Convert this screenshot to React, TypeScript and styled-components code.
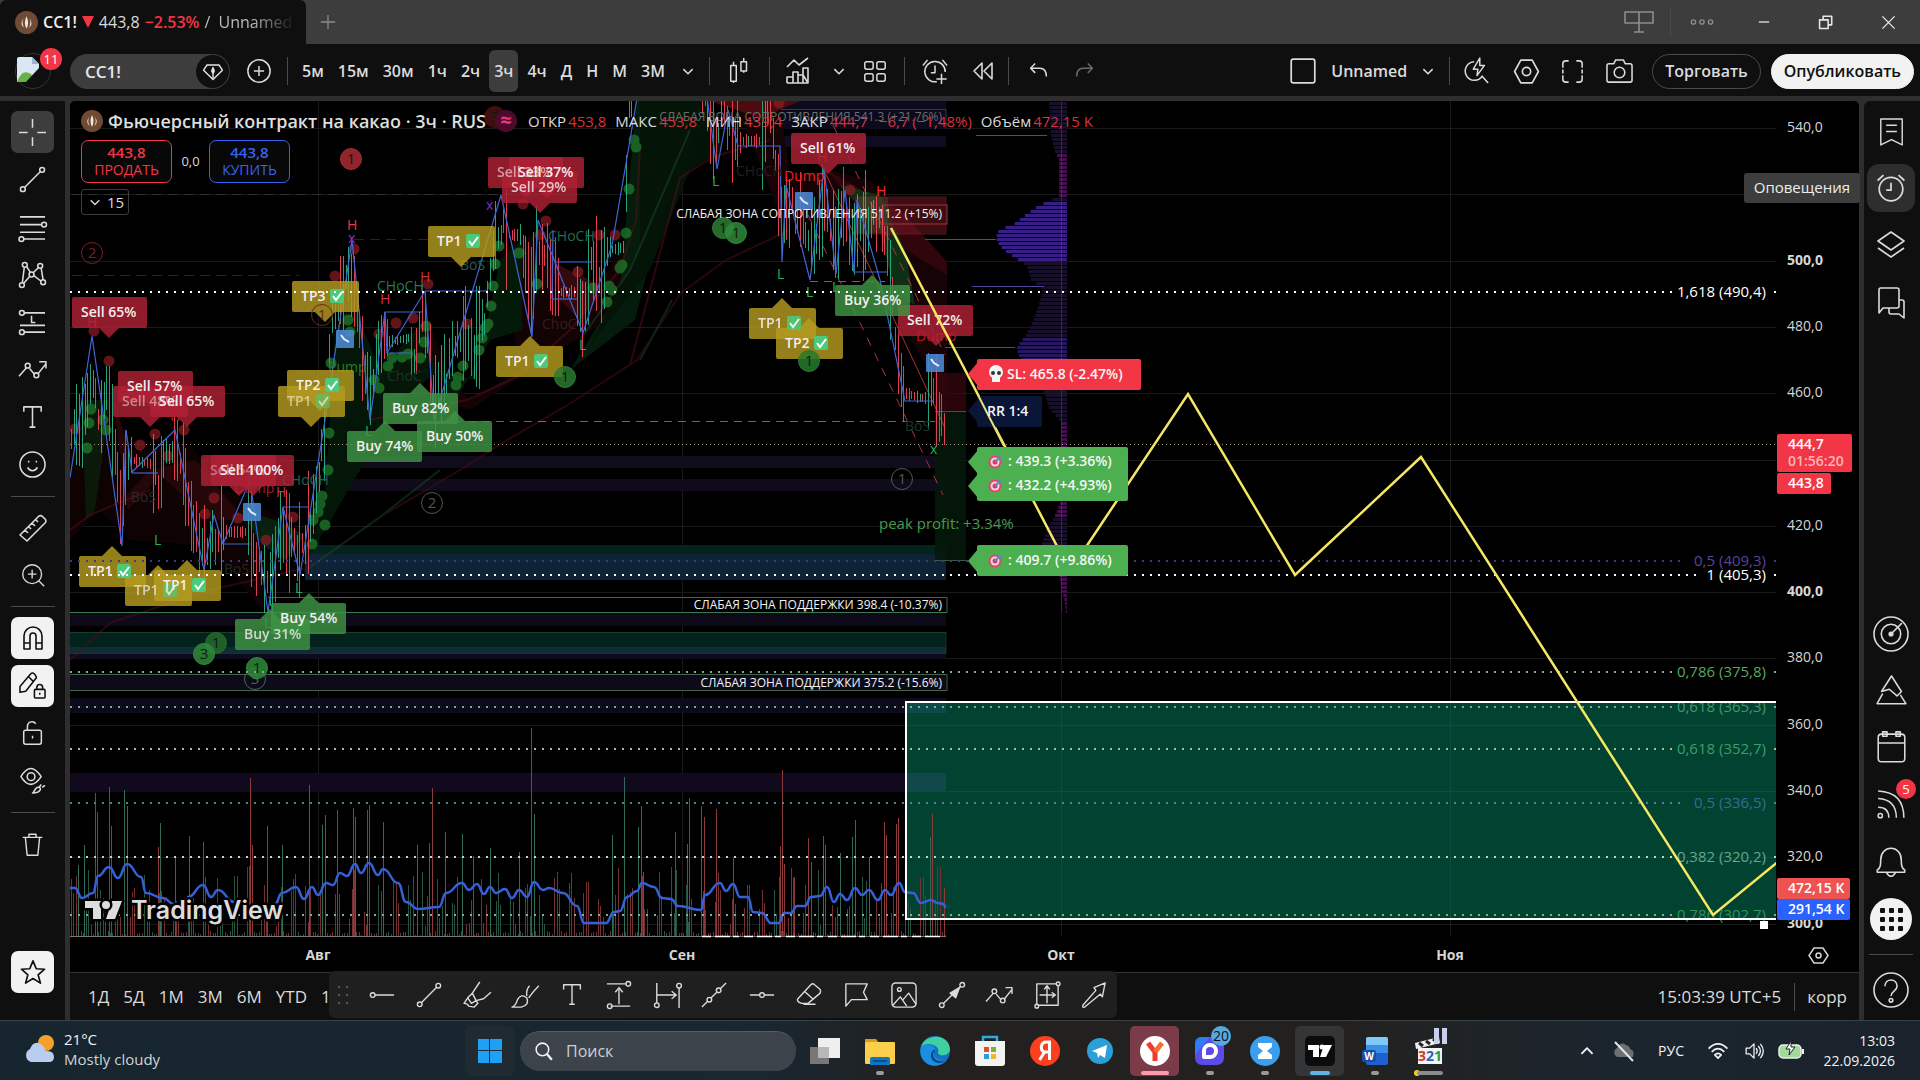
import React from 'react';
import styled, { createGlobalStyle, css } from 'styled-components';

const FONT = "'Open Sans', 'Noto Sans', sans-serif";

const Global = createGlobalStyle`
  * { box-sizing: border-box; }
  html, body, #root { height: 100%; }
  body { margin: 0; background: #0f0f0f; color: #dbdbdb; font-family: ${FONT}; font-size: 15px; overflow: hidden; }
  button, input { font: inherit; color: inherit; background: none; border: 0; padding: 0; margin: 0; }
  button { cursor: pointer; }
  svg { display: block; flex: none; }
`;

const Page = styled.div`display: flex; flex-direction: column; height: 100vh; min-height: 960px;`;

/* ---------- icons ---------- */
const ICONS: Record<string, React.ReactNode> = {
  plus: <path d="M14 5v18M5 14h18" />,
  plusCircle: <><circle cx="14" cy="14" r="12" /><path d="M14 8.500v11M8.500 14h11" /></>,
  chevron: <path d="m9 12 5 5 5-5" />,
  up: <path d="m8 17 6-6 6 6" strokeWidth="2" />,
  candles: <><path d="M4 8h6v17H4zM7 8V4M7 25v2M15 4h6v10h-6zM18 4V0M18 14v2" /></>,
  indicators: <path d="m3 10 7-7 5 5 9-7M3 26v-6h6v6M9 20v-5h5v11M14 18h5v8M19 18v-7h5v15zM3 26h21" />,
  grid: <><rect x="3" y="4" width="9" height="8" rx="2" /><rect x="16" y="4" width="9" height="8" rx="2" /><rect x="3" y="17" width="9" height="8" rx="2" /><rect x="16" y="17" width="9" height="8" rx="2" /></>,
  alarmPlus: <><path d="M16 25.500A11 11 0 1 1 25 15M14 8v8H9.500M1 8l5-6M27 8l-5-6M21 17v11M15.500 22.500h11" /></>,
  alarm: <><circle cx="14" cy="15" r="11" /><path d="M14 9v7H9.500M1.500 7 7 2M26.500 7 21 2" /></>,
  rewind: <path d="M13 6v16L5 14zM23 6v16l-8-8z" />,
  undo: <path d="m11 6-5 5 5 5M6 11h10c5 0 7 3 7 9" />,
  redo: <path d="m17 6 5 5-5 5M22 11H12c-5 0-7 3-7 9" />,
  square: <rect x="3" y="3" width="22" height="22" rx="2" />,
  flash: <path d="M11 4a10 10 0 1 0 9 15M19 19l7 8M17 0l-7 12h5l-1 7 8-11h-5z" />,
  hex: <><path d="M8.500 3h11l6 11-6 11h-11l-6-11z" /><circle cx="14" cy="14" r="4" /></>,
  full: <path d="M4 10V6a3 3 0 0 1 3-3h3M18 3h3a3 3 0 0 1 3 3v4M24 18v4a3 3 0 0 1-3 3h-3M10 25H7a3 3 0 0 1-3-3v-4M4 12v4M24 12v4" />,
  camera: <><path d="M3 6h5l2-4h8l2 4h5a2 2 0 0 1 2 2v15a2 2 0 0 1-2 2H3a2 2 0 0 1-2-2V8a2 2 0 0 1 2-2z" /><circle cx="14" cy="15" r="5.500" /></>,
  gem: <><path d="M7 7h14l4 6-11 11L3 13z" /><path d="M14 10v13M12.500 14 14 10l1.500 4-1.500 3z" /></>,
  cross: <path d="M14 0v9M14 19v9M0 14h9M19 14h9" />,
  line: <><circle cx="4" cy="24" r="2.500" /><circle cx="24" cy="4" r="2.500" /><path d="M6 22 22 6" /></>,
  fib: <><path d="M1 3h26M1 11h22M1 19h26M5 26h22" /><circle cx="26" cy="11" r="2.500" /><circle cx="2.500" cy="26" r="2.500" /></>,
  pattern: <><circle cx="6" cy="4" r="2.500" /><circle cx="22" cy="5" r="2.500" /><circle cx="13" cy="14" r="2.500" /><circle cx="3" cy="25" r="2.500" /><circle cx="25" cy="22" r="2.500" /><path d="M5.500 6.500 3.500 22.500M8 6l4 6M15 12l5-5M23 7.500l2 12M5 23l6-7M15 15l8 6" /></>,
  projection: <><path d="M5 4h22M5 24h22M1 17h26M13 7v7h4" /><circle cx="3" cy="4" r="2.500" /><circle cx="3" cy="24" r="2.500" /></>,
  zigzag: <><path d="m0 21 8-9M11 13l5 6M20 18l8-10M21 6h7v7" /><circle cx="9" cy="10" r="2.500" /><circle cx="18" cy="20" r="2.500" /></>,
  text: <path d="M5 8V3h18v5M14 3v21M11 24h6" />,
  smile: <><circle cx="14" cy="14" r="13" /><path d="M9 17c2 4.500 8 4.500 10 0M10 10v2M18 10v2" /></>,
  ruler: <path d="m1 21 19-19q2-1 3.500 .500l3 3q1 1.500 0 3L8 27zM6 16l3 3M10 13l2 2M13 9l3 3M17 6l2 2" />,
  zoom: <><circle cx="13" cy="13" r="11" /><path d="m21 21 6 6M13 8v10M8 13h10" /></>,
  magnet: <path d="M5 25V12a9 9 0 0 1 18 0v13h-6V12a3 3 0 0 0-6 0v13zM5 19h6M17 19h6" />,
  pencilLock: <><path d="m1 15 11-13q2-2 4 0t2 4L7 20l-6 1zM10 5l5 5" /><rect x="16" y="18" width="11" height="9" rx="1" /><path d="M18.500 18v-2a3 3 0 0 1 6 0v2M21.500 21.500v2" /></>,
  lock: <><rect x="4" y="11" width="19" height="15" rx="2" /><path d="M8 11V6a5 5 0 0 1 9-2M13.500 17v3" /></>,
  eye: <><path d="M2 10q10-17 21 0-11 16-21 0z" /><circle cx="12.500" cy="10" r="4" /><path d="M14 27c2 0 2-6 6-6s3 6-6 6zM21 21l2-3M24 21l3-2" /></>,
  trash: <path d="M3 6h22M10 6V2.500h8V6M6 6l2 20h12l2-20" />,
  star: <path d="m14 2 3.500 8.500 9 .500-7 6 2.500 9-8-5-8 5 2.500-9-7-6 9-.500z" />,
  bookmark: <path d="M2 0h24v29l-12-6-12 6zM8 7h12M8 14h12" />,
  layers: <path d="m14 1 13 9-13 9L1 10zM1 17l13 9 13-9" />,
  chat: <path d="M3 0h17a2 2 0 0 1 2 2v16a2 2 0 0 1-2 2H6l-4 5V2a2 2 0 0 1 1-2M22 12h3a2 2 0 0 1 2 2v16l-5-4h-8a2 2 0 0 1-2-2v-4" />,
  target: <><circle cx="14" cy="14" r="14" /><circle cx="14" cy="14" r="8" /><circle cx="14" cy="14" r="1.500" fill="currentColor" /><path d="m14 14 9-9" /></>,
  pyramid: <path d="M14 0 5 14l7-2 7 6 4-4zM6 16 1 25h26l-5-8" />,
  calendar: <><rect x="2" y="1" width="24" height="25" rx="3" /><path d="M2 9h24M6-1h4v4H6zM18-1h4v4h-4z" /></>,
  rss: <><circle cx="4" cy="24" r="2" /><path d="M2 16q10 0 10 10M2 8q17 1 17 18M2 1q24 1 24 25" /></>,
  bell: <path d="M2 21c3-2 3-5 3-9 0-6 4-10 9-10s9 4 9 10c0 4 0 7 3 9v2H2zM10 23q4 7 8 0" />,
  help: <><circle cx="14" cy="14" r="14" /><path d="M9 11c0-7 10-7 10 0 0 4-5 4-5 8" /><circle cx="14" cy="22.500" r="1.500" /></>,
  hray: <><circle cx="4" cy="14" r="2.500" /><path d="M6.500 14H27" /></>,
  marker: <path d="m17 0-8 12 4 8 8-2 8-7M9 12l-5 5 4 6 5-3M4 17l-4 6q4 0 5 3l6 1 4-4-2-3" />,
  brush: <path d="M1 27q4-1 6-8 4-7 10-2 3 8-6 10zM17 15q-1-7 3-11M19 17q5-7 11-13" />,
  vrange: <><path d="M1 2h21M5 26h21M14 24V8M10 11l4-5 4 5" /><circle cx="24" cy="2" r="2.500" /><circle cx="4" cy="26" r="2.500" /></>,
  hrange: <><path d="M3 1v22M27 6v22M3 14h20M19 10l5 4-5 4" /><circle cx="3" cy="25" r="2.500" /><circle cx="27" cy="4" r="2.500" /></>,
  ext: <><path d="m1 27 6-6M11 17l6-6M21 7l6-6" /><circle cx="9" cy="19" r="2.500" /><circle cx="19" cy="9" r="2.500" /></>,
  hline: <><circle cx="14" cy="14" r="2.500" /><path d="M1 14h10M17 14h10" /></>,
  eraser: <path d="m2 18 14-15q2-2 4 0l6 5q1 2 0 4L13 23H6q-6-2-4-5zM9 10l9 8M8 24h13" />,
  flag: <path d="M2 26V2h23l-4 9 4 8H8z" />,
  image: <><rect x="1" y="1" width="26" height="26" rx="4" /><circle cx="9" cy="8" r="2" /><path d="m2 25 8-9 7 10M13 19l6-7 8 12" /></>,
  arrowLine: <><circle cx="3" cy="25" r="2.500" /><circle cx="25" cy="3" r="2.500" /><path d="m5 23 18-18" /><path d="m22 6-4 11-6-5z" fill="currentColor" /></>,
  cells: <><path d="M3 25V2h21M26 4v21H5M14 5v18M6 14h17M11 8l3-4 3 4M19 11l4 3-4 3" /><circle cx="26" cy="2" r="2" /><circle cx="3" cy="26" r="2" /></>,
  arrowOut: <path d="M26 1 14 6l2 3L2 25q-1 3 2 2l17-14 2 3z" />,
  search: <><circle cx="12" cy="12" r="8" strokeWidth="2" /><path d="m18 18 6 7" strokeWidth="3" /></>,
  screen: <path d="M1 4h28v11H1zM15 4v20M10 24h10" />,
  dots: <><circle cx="4" cy="14" r="2.500" /><circle cx="14" cy="14" r="2.500" /><circle cx="24" cy="14" r="2.500" /></>,
  minus: <path d="M6 14h16" strokeWidth="2" />,
  restore: <path d="M5 11h12v12H5zM10 11V6h12v12h-5" strokeWidth="2.200" />,
  close: <path d="m5 5 18 18M23 5 5 23" strokeWidth="2" />,
  wifi: <path d="M2 11q12-12 24 0M6 15q8-8 16 0M10 19q4-4 8 0l-4 4z" strokeWidth="2.200" />,
  sound: <path d="M3 10h5l6-6v20l-6-6H3zM17 10q3 4 0 8M20 7q6 7 0 14M23 4q8 10 0 20" strokeWidth="1.800" />,
};

const Icon = ({ n, s = 28, w = 1.6 }: { n: string; s?: number; w?: number }) => (
  <svg width={s} height={s} viewBox="0 0 28 28" fill="none" stroke="currentColor" strokeWidth={w} strokeLinejoin="round" overflow="visible" aria-hidden="true">{ICONS[n]}</svg>
);

const Cocoa = ({ s }: { s: number }) => (
  <svg width={s} height={s} viewBox="0 0 22 22" aria-hidden="true"><circle cx="11" cy="11" r="11" fill="#6f4a35" /><path d="M11 5q3 6 0 12-3-6 0-12M8 7q-2 5 1 9-5-3-1-9M14 7q2 5-1 9 5-3 1-9" fill="#f5e9de" /></svg>
);

/* ---------- title bar ---------- */
const TitleBar = styled.header`display: flex; align-items: stretch; height: 44px; background: #3d3d3d;`;
const Tab = styled.div`
  display: flex; align-items: center; gap: 5px; width: 306px; padding: 0 6px 0 15px; background: #0f0f0f; border-radius: 6px 6px 0 0;
  font-size: 16px; white-space: nowrap; overflow: hidden;
`;
const TabSymbol = styled.b`font-weight: 600; color: #eee;`;
const TabTail = styled.span`flex: 1; color: #bbb; mask-image: linear-gradient(90deg, #000 50%, transparent 95%);`;
const Triangle = styled.i`border: 6px solid transparent; border-top: 12px solid #f23645; border-bottom: 0;`;
const Change = styled.b`color: #f23645; font-weight: 600;`;
const Grow = styled.div`flex: 1;`;
const WinButton = styled.button<{ $w: number; $dim?: boolean }>`
  width: ${p => p.$w}px; display: grid; place-items: center; color: ${p => (p.$dim ? '#8d8d8d' : '#e6e6e6')};
`;
const Sep = styled.span<{ $m?: string }>`width: 1px; height: 28px; background: #4a4a4a; align-self: center; flex: none; margin: ${p => p.$m || '0'};`;

/* ---------- top toolbar ---------- */
const Toolbar = styled.nav`display: flex; align-items: center; height: 52px; padding: 2px 6px 0 15px; background: #0f0f0f; white-space: nowrap;`;
const Avatar = styled.button`position: relative; width: 36px; height: 36px; border: 1px solid #333; border-radius: 50%; margin-right: 19px;`;
const Count = styled.span`
  position: absolute; right: -12px; top: -6px; width: 22px; height: 22px; border-radius: 50%; background: #f23645; color: #fff;
  font-size: 13px; line-height: 22px; text-align: center;
`;
const SymbolPill = styled.button`
  display: flex; align-items: center; justify-content: space-between; width: 160px; height: 35px; border-radius: 18px; background: #3d3d3d;
  padding: 0 1px 0 15px; font-size: 17px; font-weight: 600; color: #e6e6e6;
`;
const PillBadge = styled.span`display: grid; place-items: center; width: 33px; height: 33px; border-radius: 50%; background: #0f0f0f;`;
const Tool = styled.button<{ $w: number; $dim?: boolean }>`
  width: ${p => p.$w}px; height: 42px; display: grid; place-items: center; flex: none; color: ${p => (p.$dim ? '#6b6b6b' : '#dbdbdb')};
`;
const Intervals = styled.div`display: flex; gap: 4px; margin-left: 9px;`;
const Interval = styled.button<{ $on?: boolean }>`
  height: 42px; padding: 0 5px; border-radius: 6px; font-size: 16px; font-weight: 600; color: #dbdbdb;
  ${p => p.$on && css`background: #3d3d3d;`}
`;
const LayoutName = styled.button`font-weight: 600; font-size: 16px; margin-left: 12px;`;
const RoundButton = styled.button<{ $solid?: boolean }>`
  height: 35px; border-radius: 18px; padding: 0 12px; margin-left: 10px; font-size: 16px; font-weight: 600;
  border: 1px solid ${p => (p.$solid ? '#f2f2f2' : '#4a4a4a')};
  ${p => p.$solid && css`background: #f2f2f2; color: #0f0f0f;`}
`;

/* ---------- body ---------- */
const Body = styled.main`flex: 1; min-height: 0; display: flex; gap: 5px; padding-top: 5px; background: #2e2e2e;`;
const LeftBar = styled.aside`display: flex; flex-direction: column; align-items: center; width: 65px; padding: 10px 0 27px; background: #0f0f0f;`;
const Group = styled.div<{ $h: number }>`display: flex; flex-direction: column; justify-content: space-between; height: ${p => p.$h}px;`;
const SideTool = styled.button<{ $tone?: 'active' | 'white' }>`
  width: 43px; height: 42px; display: grid; place-items: center; border-radius: 7px; flex: none;
  ${p => p.$tone === 'active' && css`background: #3d3d3d;`}
  ${p => p.$tone === 'white' && css`background: #f2f2f2; color: #0f0f0f;`}
`;
const Rule = styled.hr<{ $m?: number }>`width: 44px; height: 1px; margin: ${p => p.$m ?? 10}px 0; border: 0; background: #4a4a4a; flex: none;`;
const RightBar = styled.aside`display: flex; flex-direction: column; align-items: center; gap: 9px; width: 56px; padding: 6px 2px 6px 0; background: #0f0f0f; border-radius: 6px 0 0 0;`;
const RightTool = styled.button<{ $on?: boolean }>`
  position: relative; width: 48px; height: 48px; display: grid; place-items: center; border-radius: 12px; flex: none;
  ${p => p.$on && css`background: #2e2e2e;`}
`;
const Tip = styled.span`
  position: absolute; right: 55px; top: 9px; height: 30px; padding: 0 10px; border-radius: 3px; background: #3d3d3d; color: #eee;
  font-size: 15px; line-height: 29px; z-index: 3;
`;
const RightCount = styled(Count)`right: -1px; top: -2px; width: 20px; height: 20px; line-height: 20px;`;
const Apps = styled.span`
  display: grid; grid-template-columns: repeat(3, 5px); gap: 4px; place-content: center; width: 42px; height: 42px; border-radius: 50%; background: #f2f2f2;
  i { width: 5px; height: 5px; background: #111; border-radius: 1px; }
`;
const Center = styled.section`position: relative; flex: 1; min-width: 0; display: flex; flex-direction: column; background: #000; border-radius: 5px 5px 0 0;`;
const Chart = styled.div`position: relative; flex: 1; min-height: 0; overflow: hidden; > svg { width: 100%; height: 100%; }`;

/* ---------- legend over the chart ---------- */
const Legend = styled.div`position: absolute; left: 11px; top: 7px; display: flex; flex-direction: column; gap: 6px; align-items: flex-start;`;
const LegendRow = styled.div`display: flex; align-items: center; height: 25px; white-space: nowrap;`;
const LegendTitle = styled.h1`margin: 0 0 0 5px; font-size: 18px; font-weight: 600; color: #dedede; width: 380px; overflow: hidden;`;
const Approx = styled.span`
  width: 22px; height: 22px; margin: 0 11px 0 7px; border-radius: 50%; background: #4d0b2b; color: #e8367f; font-size: 20px; line-height: 20px; text-align: center; font-weight: 700;
`;
const Ohlc = styled.span`display: flex; gap: 9px; font-size: 15px; color: #dbdbdb; em { color: #d8313f; font-style: normal; margin-left: 2px; }`;
const TradeRow = styled.div`display: flex; align-items: center; height: 44px;`;
const TradeButton = styled.button<{ $c: string; $w: number }>`
  display: flex; flex-direction: column; align-items: center; justify-content: center; width: ${p => p.$w}px; height: 43px; border: 1px solid ${p => p.$c};
  border-radius: 7px; color: ${p => p.$c}; background: #080808; font-size: 14px; line-height: 17px; b { font-size: 15px; font-weight: 600; }
`;
const Spread = styled.span`width: 37px; text-align: center; font-size: 13px;`;
const Collapse = styled.button`display: flex; align-items: center; height: 26px; width: 48px; padding-left: 1px; border: 1px solid #3d3d3d; border-radius: 3px; font-size: 15px;`;

/* ---------- bottom bar ---------- */
const BottomBar = styled.footer`position: relative; display: flex; align-items: center; height: 48px; padding: 0 12px 0 13px; background: #0f0f0f; border-top: 1px solid #333; font-size: 17px; white-space: nowrap;`;
const Range = styled.button`padding: 0 5px; margin-right: 4px; font-weight: 500;`;
const Clock = styled.button`font-weight: 500;`;
const Favorites = styled.div`
  position: absolute; left: 259px; top: -2px; display: flex; align-items: center; justify-content: space-between; width: 788px; max-width: 60%; height: 47px;
  padding: 0 9px; background: #1f1f1f; border-radius: 6px; overflow: hidden;
`;
const FavTool = styled.button`width: 28px; height: 40px; display: grid; place-items: center;`;
const Grip = styled.span`display: grid; grid-template-columns: 2px 2px; gap: 6px; i { width: 2px; height: 2px; background: #555; }`;

/* ---------- taskbar ---------- */
const Taskbar = styled.div`
  display: flex; align-items: center; height: 60px; border-top: 1px solid #3b4347; color: #f2f2f2;
  background: linear-gradient(90deg, #16252e 0, #18262f 20%, #1a2630 40%, #222120 48%, #232120 70%, #1b252e 84%, #1a232c 100%);
`;
const Weather = styled.button`display: flex; align-items: center; gap: 8px; width: 465px; padding: 0 0 3px 24px; text-align: left; font-size: 15px; line-height: 20px; small { display: block; font-size: 15px; color: #cfd4d7; }`;
const Task = styled.button<{ $bg?: string }>`
  position: relative; display: grid; place-items: center; width: 49px; height: 50px; margin-right: 6px; border-radius: 5px; background: ${p => p.$bg || 'transparent'}; flex: none;
`;
const Mark = styled.i<{ $w: number; $c: string }>`position: absolute; left: 50%; bottom: 1px; width: ${p => p.$w}px; height: 4px; margin-left: -${p => p.$w / 2}px; border-radius: 2px; background: ${p => p.$c};`;
const SearchBox = styled.label`position: relative; display: flex; align-items: center; gap: 11px; width: 276px; height: 40px; margin: 0 4px 0 0; padding-left: 13px; border-radius: 20px; background: #3c434a; border-top: 1px solid #565c61;
  input { width: 180px; font-size: 16px; outline: 0; } input::placeholder { color: #cdd0d2; opacity: 1; }`;
const Tray = styled.div`display: flex; align-items: center; gap: 12px; margin-left: auto; padding-right: 25px; font-size: 14px;`;
const TrayItem = styled.button<{ $pad?: number }>`display: grid; place-items: center; min-width: 24px; height: 40px; padding: 0 ${p => p.$pad || 0}px;`;
const DateTime = styled.button`width: 78px; text-align: right; font-size: 14px; line-height: 20px;`;

/* ---------- chart data ---------- */
type P = [number, number];
const pts = (a: P[]) => a.map(p => p.join(',')).join(' ');
const wave = (a: P[]) => a.reduce((d, [x, y], i) => {
  if (!i) return `M${x} ${y}`;
  const m = (a[i - 1][0] + x) / 2;
  return `${d}C${m} ${a[i - 1][1]} ${m} ${y} ${x} ${y}`;
}, '');
const noise = (seed: number) => { const v = Math.sin(seed * 127.1) * 43758.5453; return v - Math.floor(v); };

const PRICE: P[] = [[70, 440], [80, 430], [92, 370], [99, 420], [108, 390], [122, 520], [126, 465], [132, 460], [152, 464], [159, 485], [164, 455], [175, 448], [184, 475], [193, 530], [204, 550], [214, 535], [219, 545], [224, 532], [246, 532], [250, 510], [254, 555], [268, 590], [283, 530], [300, 556], [308, 535], [318, 480], [325, 430], [331, 320], [340, 300], [352, 275], [361, 345], [369, 395], [383, 335], [388, 342], [410, 338], [415, 360], [422, 310], [434, 395], [445, 380], [462, 330], [475, 350], [486, 310], [492, 250], [500, 225], [508, 235], [520, 235], [532, 300], [538, 240], [553, 280], [560, 292], [575, 292], [583, 315], [593, 260], [600, 280], [612, 250], [624, 247], [628, 130], [636, 60], [702, 60], [706, 100], [717, 145], [722, 115], [735, 135], [742, 141], [762, 141], [770, 105], [782, 225], [790, 205], [802, 215], [811, 255], [824, 205], [836, 245], [842, 210], [854, 240], [860, 235], [868, 225], [882, 215], [888, 265], [900, 370], [905, 393], [920, 398], [928, 398], [931, 385], [936, 405], [946, 425]];

const priceAt = (x: number) => {
  for (let i = 1; i < PRICE.length; i++) if (x <= PRICE[i][0]) {
    const [a, b] = [PRICE[i - 1], PRICE[i]];
    const s = (b[1] - a[1]) / (b[0] - a[0]);
    return { y: a[1] + s * (x - a[0]), s };
  }
  return { y: 425, s: 1 };
};
const BARS = Array.from({ length: 322 }, (_, i) => {
  const x = Math.round(71 + i * 2.72) + 0.5;
  const { y, s } = priceAt(x);
  const flat = Math.abs(s) < 0.5;
  const h = flat ? 3 + noise(i) * 4 : 10 + noise(i) ** 1.5 * 42;
  const o = flat ? 0 : (noise(i + 500) - 0.5) * 20;
  const up = s < 0 ? noise(i + 900) > 0.12 : noise(i + 900) > 0.85;
  return { x, y1: Math.round(y - h + o), y2: Math.round(y + h + o), c: up ? '#2cb389' : '#f5455a' };
});

const ZIG: P[][] = [
  [[70, 478], [92, 336], [122, 546], [126, 430], [132, 472]],
  [[132, 473], [158, 473]], [[132, 472], [175, 430], [204, 570], [214, 515], [223, 544], [250, 544]], [[223, 544], [250, 480], [268, 612], [283, 507], [308, 507]],
  [[283, 507], [300, 575], [325, 420], [352, 240], [370, 420], [385, 312], [422, 312]], [[385, 312], [387, 353], [412, 353]], [[387, 353], [425, 291], [487, 291]], [[425, 291], [434, 420], [501, 195], [532, 337], [538, 220], [555, 262], [591, 262]],
  [[555, 262], [583, 333], [612, 245], [630, 140], [640, 80]], [[552, 299], [578, 299]], [[553, 230], [552, 299]], [[706, 90], [717, 169], [728, 110], [738, 146], [780, 146], [782, 262], [786, 185], [810, 280], [824, 168], [836, 274], [845, 190], [854, 272], [888, 272]],
  [[854, 272], [857, 200], [880, 280], [905, 401], [934, 401]],
];

const GREEN_DOTS: P[] = [[91, 409], [89, 423], [87, 448], [103, 420], [106, 430], [325, 525], [322, 496], [320, 504], [318, 512], [313, 520], [312, 544], [328, 470], [329, 433], [331, 363], [348, 320], [350, 332], [374, 380], [379, 388], [388, 366], [392, 358], [402, 357], [408, 354], [420, 358], [424, 342], [426, 326], [463, 366], [458, 377], [456, 385], [479, 350], [482, 338], [485, 328], [488, 324], [491, 306], [493, 286], [495, 264], [499, 246], [519, 253], [537, 284], [593, 288], [607, 302], [609, 286], [612, 290], [622, 265], [620, 268], [626, 233], [629, 189], [634, 140], [636, 147]];
const RED_DOTS: P[] = [[94, 331], [109, 361], [75, 429], [140, 445], [155, 434], [168, 456], [184, 430], [214, 498], [205, 514], [238, 518], [266, 540], [293, 517], [335, 276], [354, 249], [379, 334], [396, 323], [413, 318], [428, 284], [467, 324], [523, 204], [546, 221], [540, 235], [578, 272], [599, 235], [615, 235], [779, 103], [850, 190]];

const VOL: [number, number, boolean][] = [[95, 793, false], [97, 812, false], [109, 787, false], [111, 826, false], [158, 847, false], [189, 836, false], [203, 842, false], [250, 778, false], [252, 845, false], [267, 826, false], [337, 810, false], [367, 810, false], [369, 805, false], [432, 788, false], [429, 843, false], [473, 856, false], [531, 728, false], [78, 865, true], [84, 845, true], [124, 790, true], [127, 806, true], [160, 823, true], [175, 858, true], [282, 845, true], [309, 785, true], [325, 815, true], [322, 825, true], [353, 808, true], [355, 817, true], [383, 822, true], [417, 845, true], [445, 832, true], [462, 834, true], [490, 848, true], [519, 852, true], [534, 814, true], [612, 835, true], [624, 777, true], [638, 827, true], [641, 806, true], [643, 872, true], [675, 832, false], [689, 798, false], [687, 844, false], [701, 806, false], [704, 817, false], [716, 809, false], [733, 858, false], [782, 770, false], [780, 846, false], [784, 864, false], [794, 877, false], [808, 838, false], [811, 862, false], [823, 836, true], [825, 845, true], [840, 853, true], [855, 820, true], [852, 837, true], [869, 857, true], [884, 822, false], [886, 835, false], [898, 818, false], [896, 824, false], [930, 837, true], [932, 814, false], [944, 888, false]];
const SMALL_VOL = Array.from({ length: 359 }, (_, i) => {
  const tall = i % 6 < 3;
  const h = tall ? 10 + noise(i + 77) * 60 : 1 + noise(i) * 4;
  return { x: Math.round(71 + i * 2.44), h: Math.round(h), c: noise(Math.floor(i / 6) + 900) > 0.5 ? '#255443' : '#76302f' };
});
const MA: P[][] = [
  [[70, 888], [75, 888], [82, 898], [93, 893], [98, 876], [109, 867], [118, 878], [127, 864], [141, 877], [146, 893], [163, 898], [174, 904]],
  [[188, 897], [203, 885], [211, 897], [218, 890], [234, 902]],
  [[275, 904], [282, 893], [296, 887], [304, 899], [312, 887], [318, 895], [326, 883], [333, 885], [340, 873], [347, 876], [355, 864], [361, 873], [369, 863], [378, 875], [383, 869], [398, 883], [406, 902], [418, 909], [439, 907], [446, 893], [462, 883], [469, 890], [477, 884], [484, 894], [490, 887], [496, 893], [505, 889], [512, 898], [519, 890], [527, 897], [534, 882], [543, 890], [549, 888], [563, 893], [577, 906], [584, 923], [606, 923], [614, 912], [620, 911], [627, 897], [637, 891], [642, 883], [654, 887], [662, 898], [671, 899], [678, 906], [701, 910], [705, 895], [720, 883], [726, 891], [733, 884], [740, 897], [748, 897], [753, 912], [762, 913], [771, 923], [779, 923], [784, 913], [791, 913], [797, 906], [805, 906], [811, 897], [820, 896], [827, 887], [834, 902], [840, 894], [847, 900], [855, 888], [862, 895], [869, 890], [878, 900], [885, 890], [891, 895], [899, 883], [905, 892], [913, 893], [921, 903], [931, 900], [938, 903], [944, 904], [945, 907]],
];
const PROFILE: P[] = [[101, 18], [134, 16], [150, 12], [158, 8], [195, 8], [204, 28], [214, 42], [224, 55], [228, 68], [236, 71], [241, 69], [248, 64], [256, 52], [264, 40], [278, 36], [287, 24], [300, 27], [320, 34], [335, 42], [345, 50], [352, 49], [358, 46], [392, 22], [407, 18], [420, 6], [500, 6], [514, 12], [528, 20], [545, 26], [556, 20], [572, 8], [590, 5], [600, 2], [611, 1]];
const profileWidth = (y: number) => {
  for (let i = 1; i < PROFILE.length; i++) if (y <= PROFILE[i][0]) {
    const [a, b] = [PROFILE[i - 1], PROFILE[i]];
    return a[1] + ((b[1] - a[1]) * (y - a[0])) / (b[0] - a[0]);
  }
  return 0;
};
const PROFILE_ROWS = Array.from({ length: 128 }, (_, i) => 102 + i * 4);

const TONES = { sell: '#b02135', buy: '#3f9445', tp: '#b59c20' };
type Callout = { k: keyof typeof TONES; x: number; y: number; w?: number; px: number; up?: boolean; t: string; dim?: number };
const CALLOUTS: Callout[] = [
  { k: 'sell', x: 72, y: 297, px: 109, t: 'Sell 65%' }, { k: 'sell', x: 118, y: 371, px: 156, t: 'Sell 57%' }, { k: 'sell', x: 113, y: 386, px: 150, t: 'Sell 48%', dim: 0.5 }, { k: 'sell', x: 150, y: 386, px: 187, t: 'Sell 65%' },
  { k: 'sell', x: 201, y: 455, px: 239, t: 'Sell 54%', dim: 0.4 }, { k: 'sell', x: 211, y: 455, w: 83, px: 253, t: 'Sell 100%' },
  { k: 'sell', x: 488, y: 157, px: 526, t: 'Sell 33%', dim: 0.6 }, { k: 'sell', x: 502, y: 172, px: 540, t: 'Sell 29%', dim: 0.8 }, { k: 'sell', x: 509, y: 157, px: 547, t: 'Sell 37%' },
  { k: 'sell', x: 791, y: 133, px: 828, t: 'Sell 61%' }, { k: 'sell', x: 898, y: 305, px: 936, t: 'Sell 72%' },
  { k: 'buy', x: 383, y: 393, px: 420, up: true, t: 'Buy 82%' }, { k: 'buy', x: 417, y: 421, px: 455, up: true, t: 'Buy 50%' }, { k: 'buy', x: 347, y: 431, px: 385, up: true, t: 'Buy 74%' },
  { k: 'buy', x: 235, y: 619, px: 270, up: true, t: 'Buy 31%', dim: 0.8 }, { k: 'buy', x: 271, y: 603, px: 309, up: true, t: 'Buy 54%' }, { k: 'buy', x: 835, y: 285, px: 872, up: true, t: 'Buy 36%' },
  { k: 'tp', x: 428, y: 226, px: 461, t: 'TP1' }, { k: 'tp', x: 292, y: 281, px: 325, t: 'TP3' }, { k: 'tp', x: 278, y: 386, px: 311, t: 'TP1', dim: 0.6 }, { k: 'tp', x: 287, y: 370, px: 320, t: 'TP2' },
  { k: 'tp', x: 496, y: 346, px: 530, up: true, t: 'TP1' }, { k: 'tp', x: 79, y: 556, px: 112, up: true, t: 'TP1' }, { k: 'tp', x: 125, y: 575, px: 158, up: true, t: 'TP1', dim: 0.7 }, { k: 'tp', x: 154, y: 570, px: 187, up: true, t: 'TP1' },
  { k: 'tp', x: 749, y: 308, px: 782, up: true, t: 'TP1', dim: 0.9 }, { k: 'tp', x: 776, y: 328, px: 809, up: true, t: 'TP2' },
];

const CalloutShape = ({ k, x, y, w, px, up }: Callout) => (
  <g fill={TONES[k]} opacity=".82">
    <rect x={x} y={y} width={w || (k === 'tp' ? 67 : 75)} height="31" rx="2" />
    <path d={up ? `M${px - 10} ${y}l10-10 10 10z` : `M${px - 10} ${y + 31}l10 10 10-10z`} />
  </g>
);
const CalloutText = ({ k, x, y, t, dim = 1 }: Callout) => (
  <g opacity={dim}>
    {k === 'tp' && <g><rect x={x + 38} y={y + 8} width="14" height="14" rx="2" fill="#4cc97a" /><path d={`M${x + 41} ${y + 15}l3 4 6-8`} stroke="#fff" strokeWidth="2" fill="none" /></g>}
    <text x={x + 9} y={y + 20} fontSize="14" fontWeight="600" fill="#f4eeee">{t}</text>
  </g>
);

const SMALL: [number, number, string, string][] = [
  [87, 327, 'H', '#d32f3f'], [347, 230, 'H', '#f23645'], [348, 243, 'x', '#a02ac0'], [380, 304, 'H', '#d32f3f'], [420, 282, 'H', '#d32f3f'], [170, 421, 'H', '#a52a36'], [276, 497, 'H', '#d32f3f'], [486, 210, 'x', '#8a2ac0'], [817, 162, 'H', '#e02d3c'], [876, 196, 'H', '#f23030'],
  [154, 545, 'L', '#22b35c'], [295, 593, 'L', '#22b35c'], [264, 628, 'L', '#2c9a52'], [365, 436, 'L', '#22b35c'], [579, 350, 'L', '#22b35c'], [712, 186, 'L', '#22b35c'], [777, 279, 'L', '#22b35c'], [806, 297, 'L', '#22b35c'], [832, 292, 'L', '#22b35c'], [930, 454, 'x', '#22b35c'],
  [377, 291, 'CHoCH', '#1f7a5b'], [548, 241, 'CHoCH', '#1f6e53'], [282, 485, 'CHoCH', '#24604e'], [460, 270, 'BoS', '#2a5c48'], [328, 372, 'Pump', '#237d2a'], [234, 493, 'Dump', '#a51d2a'], [784, 181, 'Dump', '#f02020'], [916, 341, 'Dump', '#c01824'],
  [131, 502, 'BoS', '#2a2a2a'], [224, 574, 'BoS', '#1e2b24'], [542, 329, 'ChoC', '#3a1a1e'], [387, 381, 'ChoC', '#1c3322'], [736, 176, 'CHoCH', '#251d1d'], [905, 431, 'BoS', '#173a25'],
];
const WAVES: [number, number, string, string, boolean][] = [[351, 159, '1', '#a92b34', true], [92, 253, '2', '#7a1f26', false], [432, 503, '2', '#4a5a50', false], [902, 479, '1', '#4c5c50', false], [216, 643, '1', '#256b2d', true], [204, 654, '3', '#2f8a3a', true], [255, 679, '3', '#476655', false], [257, 668, '1', '#2f8a3a', true], [565, 377, '1', '#2a7a30', true], [723, 228, '1', '#2f7d35', true], [736, 233, '1', '#2f8a3a', true], [809, 361, '1', '#267a2c', true], [495, 117, '3', '#4a1016', true], [322, 315, '1', '#6b2a1c', false]];
const ZONES: [number, number, number, number, string][] = [[781, 101, 165, 28, '#0c0b1e'], [781, 136, 165, 11, '#0f0c20'], [325, 456, 621, 12, '#100c1c'], [325, 479, 621, 12, '#0f0b1b'], [305, 545, 641, 9, '#04231d'], [305, 554, 641, 26, '#0e2436'], [70, 613, 876, 13, '#0e0919'], [70, 632, 876, 21, '#02221b'], [70, 647, 876, 6, '#102c36'], [70, 653, 876, 6, '#0d0b1c'], [70, 674, 876, 16, '#0d0b1a'], [70, 698, 876, 15, '#0c0b1a'], [70, 773, 876, 19, '#110a1e']];
const LEVELS: [number, string, string, string, number][] = [[292, '1,618 (490,4)', '#ffffff', '#fff', 1672], [561, '0,5 (409,3)', '#3f3c78', '#5543a0', 1684], [575, '1 (405,3)', '#ffffff', '#fff', 1698], [672, '0,786 (375,8)', '#7fa98a', '#57a860', 1672], [707, '0,618 (365,3)', '#8aa59a', '#419969', 1672], [749, '0,618 (352,7)', '#9fc0a2', '#3f9d6a', 1672], [803, '0,5 (336,5)', '#54809a', '#2f6f92', 1684], [857, '0,382 (320,2)', '#c5d6cc', '#63a694', 1672], [915, '0,786 (302,7)', '#7fb096', '#2e9457', 1672]];
const BUMPS: [number, number][] = [[345, 339], [252, 512], [804, 201], [935, 363]];

const Target = ({ x, y }: { x: number; y: number }) => (
  <g><circle cx={x} cy={y} r="6.500" fill="#e0466f" /><circle cx={x} cy={y} r="4.500" fill="#f3d5e0" /><circle cx={x} cy={y} r="2.500" fill="#d63a66" /><path d={`M${x} ${y}l6-6`} stroke="#4f8fd0" strokeWidth="2" /></g>
);
const SideTag = ({ y, h = 31, w, fill, tips }: { y: number; h?: number; w: number; fill: string; tips: number[] }) => (
  <g fill={fill}><rect x="977" y={y} width={w} height={h} rx="2" />{tips.map(t => <path key={t} d={`M978 ${t - 12}l-10 12 10 12z`} />)}</g>
);

const ChartCanvas = () => (
  <svg viewBox="70 101 1789 871" preserveAspectRatio="xMinYMin slice" fontFamily={FONT} role="img" aria-label="Фьючерсный контракт на какао">
    <defs><clipPath id="pane"><rect x="70" y="101" width="1706" height="837" /></clipPath></defs>
    <g clipPath="url(#pane)">
      <g stroke="#191919">
        {Array.from({ length: 13 }, (_, i) => <path key={i} d={`M70 ${Math.round(128 + i * 66.3)}.5H1776`} />)}
        {[318, 682, 1061, 1450].map(x => <path key={x} d={`M${x}.5 101V936`} />)}
      </g>
      {ZONES.map(([x, y, w, h, f], i) => <rect key={i} x={x} y={y} width={w} height={h} fill={f} />)}
      {/* ribbons */}
      <g>
        <path d="M70 406 90 440 108 395 130 450 190 445 225 490 258 505 300 530 275 570 262 610 230 570 195 545 130 540 100 510 70 540z" fill="#0e0203" />
        <path d="M113 400 130 450 122 500 150 470 195 460 245 520 210 520 160 475 128 510z" fill="#2c080b" opacity=".8" />
        <path d="M82 400 110 400 95 510 86 520z" fill="#0a2a10" opacity=".6" />
        <path d="M240 510 275 520 305 535 285 560 262 545z" fill="#082010" />
        <path d="M303 566 325 500 335 330 352 300 380 370 425 320 440 370 400 400 360 470 325 530z" fill="#041608" />
        <path d="M425 310 450 380 470 400 520 370 500 250 545 230 575 290 610 270 640 200 640 300 560 350 470 410 440 400z" fill="#130305" />
        <path d="M440 370 475 380 500 260 522 240 522 330 490 340 450 410z" fill="#041a08" />
        <path d="M552 262 590 280 600 290 580 320 560 300z" fill="#340a0e" />
        <path d="M636 101H700L690 160 660 220 635 320 570 370 620 290z" fill="#051b0b" />
        <path d="M640 101H712L722 150 690 170 650 270 590 345 640 250z" fill="#041508" opacity=".9" />
        <path d="M735 101H780L790 180 830 170 870 180 947 270V420L935 380 905 330 890 240 850 220 782 220z" fill="#160305" />
        <path d="M710 101H800L760 118z" fill="#4d0b10" />
        <path d="M824 168 905 215 947 262V275L890 240z" fill="#30060c" />
        <path d="M840 185 880 195 905 250 915 305 895 295 880 230z" fill="#0d3014" />
      </g>
      <g fill="none" opacity=".5">
        <path d="M70 660 110 623 210 590 310 567 380 517 465 467 502 443 571 403 637 360 681 293 726 260 790 230" stroke="#4d0f18" strokeWidth="2" />
        <path d="M70 530 90 515 150 490M370 420 467 400 517 377 570 330 620 270 636 220 640 150M630 365 650 290 680 178 713 157 770 140" stroke="#5a1019" strokeWidth="2" />
        <path d="M310 567 380 517 440 470M580 340 630 270 690 130M640 360 672 300" stroke="#174a26" strokeWidth="2" />
      </g>
      {/* risk area */}
      <rect x="935" y="373" width="31" height="38" fill="#3b0710" opacity=".7" />
      <rect x="935" y="411" width="31" height="150" fill="#04180a" opacity=".9" />
      <path d="M935 411.500H966M935 560.500H966" stroke="#365b40" />
      <rect x="856" y="197" width="90" height="37" fill="#7d1826" opacity=".5" stroke="#9c2935" />
      <rect x="858" y="197" width="30" height="36" fill="#2a5a30" opacity=".4" />
      <rect x="883" y="205" width="64" height="19" fill="none" stroke="#a33542" />
      <g fill="none" stroke="#44624e"><path d="M268 597.500H947V612.500H268" /><path d="M70 612.500H947" stroke="#3d7a52" /><path d="M70 674.500H947V690.500H70" /><path d="M70 632.500H946V653.500H70" opacity=".4" /><path d="M781 109.500H946V129" stroke="#3a3550" /></g>
      <g stroke="#3e3e3e" strokeDasharray="10 6" opacity=".6"><path d="M72 194.500H560M354 239.500H428M72 275.500H300" /></g>
      <path d="M440 421.500H935M810 281.500H885" stroke="#517560" strokeDasharray="8 6" />
      <g fill="none" stroke="#b03044" strokeDasharray="9 8"><path d="M833 125 945 355M808 215 943 495" /></g>
      <path d="M824 170 945 428" stroke="#b02f34" fill="none" />
      {/* volume profile */}
      {PROFILE_ROWS.map(y => <rect key={y} x={1067 - profileWidth(y)} y={y} width={profileWidth(y)} height="3" fill={y > 200 && y < 262 ? '#381d84' : (y > 152 && y < 198) || (y > 418 && y < 516) || y > 562 ? '#43124d' : y > 335 && y < 360 ? '#28175c' : '#171028'} />)}
      <path d="M1061.500 101V612" stroke="#5a4a7a" opacity=".4" />
      <g stroke="#51449c"><path d="M925 239.500H996M976 135.500H1047M972 286.500H1044M945 347.500H1015" /></g>
      <path d="M70 444.500H1776" stroke="#a5967f" strokeDasharray="1 3" />
      <rect x="906" y="702" width="880" height="217" fill="#024231" />
      <rect x="906" y="703" width="40" height="10" fill="#0d4a4a" /><rect x="906" y="773" width="40" height="19" fill="#11484b" />
      <g stroke="#0a5040"><path d="M906 725.500H1776M906 791.500H1776M1061.500 703V918M1450.500 703V918M906 857.500H1776" /></g>
      {/* volume */}
      {SMALL_VOL.map((v, i) => <rect key={i} x={v.x} y={936 - v.h} width="1" height={v.h} fill={v.c} />)}
      {VOL.map(([x, y, up], i) => <rect key={i} x={x} y={y} width="1" height={936 - y} fill={up ? '#2f6d58' : '#8c3a3a'} />)}
      <path d="M70 936.500H946" stroke="#777" />
      <path d="M702 936.500H942" stroke="#fff" strokeWidth="1.500" strokeDasharray="9 4 15 3 6 5" />
      {MA.map((m, i) => <path key={i} d={wave(m)} fill="none" stroke="#3560d6" strokeWidth="2.500" strokeLinecap="round" />)}
      {/* dots, bars and marks */}
      <g fill="#8a1c22" opacity=".72">{RED_DOTS.map(([x, y], i) => <circle key={i} cx={x} cy={y} r="5.500" />)}</g>
      <g fill="#1f7a2c" opacity=".75">{GREEN_DOTS.map(([x, y], i) => <circle key={i} cx={x} cy={y} r="5.500" />)}</g>
      {BARS.map((b, i) => <path key={i} d={`M${b.x} ${b.y1}V${b.y2}`} stroke={b.c} opacity=".9" />)}
      {ZIG.map((z, i) => <polyline key={i} points={pts(z)} fill="none" stroke="#3f66d6" strokeWidth="1.200" />)}
      {SMALL.map(([x, y, t, c], i) => <text key={i} x={x} y={y} fill={c} fontSize="14">{t}</text>)}
      {CALLOUTS.map((c, i) => <CalloutShape key={i} {...c} />)}
      {CALLOUTS.map((c, i) => <CalloutText key={i} {...c} />)}
      {BUMPS.map(([x, y], i) => <g key={i}><rect x={x - 9} y={y - 9} width="18" height="18" rx="1" fill="#4a86d0" opacity=".9" /><path d={`M${x - 4} ${y - 4}l3 4 5 3`} stroke="#e8eef8" strokeWidth="2" fill="none" /></g>)}
      {WAVES.map(([x, y, t, c, solid], i) => <g key={i}><circle cx={x} cy={y} r="10.500" fill={solid ? c : 'none'} fillOpacity=".85" stroke={c} /><text x={x} y={y + 5} textAnchor="middle" fontSize="15" fill={solid ? '#0c1c0e' : c}>{t}</text></g>)}
      <g textAnchor="end" fontSize="12" fill="#f2f2f2" fontWeight="500">
        <text x="942" y="121" fill="#6d6d6d" fontWeight="400">СЛАБАЯ ЗОНА СОПРОТИВЛЕНИЯ 541.3 (+21.76%)</text>
        <text x="942" y="218">СЛАБАЯ ЗОНА СОПРОТИВЛЕНИЯ 511.2 (+15%)</text>
        <text x="942" y="609">СЛАБАЯ ЗОНА ПОДДЕРЖКИ 398.4 (-10.37%)</text>
        <text x="942" y="687">СЛАБАЯ ЗОНА ПОДДЕРЖКИ 375.2 (-15.6%)</text>
      </g>
      {LEVELS.map(([y, t, dot, c, end]) => (
        <g key={y}>
          <path d={`M70 ${y}H${end}M1774 ${y}h2`} stroke={dot} strokeWidth="2" strokeDasharray="2 6" />
          <text x="1766" y={y + 5} textAnchor="end" fontSize="15" fill={c}>{t}</text>
        </g>
      ))}
      <path d="M1780 702H906V919H1780" fill="none" stroke="#fff" strokeWidth="2" />
      <polyline points="891,228 1070,571 1188,394 1295,575 1421,457 1713,915 1780,860" fill="none" stroke="#f5e663" strokeWidth="2.500" />
      <rect x="1760" y="921" width="8" height="8" fill="#fff" />
      <SideTag y={359} w={164} fill="#f23645" tips={[374]} />
      <SideTag y={396} w={65} fill="#0a1638" tips={[411]} />
      <SideTag y={447} h={54} w={151} fill="#4caf50" tips={[462, 486]} />
      <SideTag y={545} w={151} fill="#4caf50" tips={[561]} />
      <path d="M978 395 1004 446" stroke="#e9de7c" strokeWidth="2" />
      <g fill="#f5f5f5" fontSize="14" fontWeight="600">
        <circle cx="996" cy="372" r="7" /><rect x="992" y="377" width="8" height="5" /><circle cx="993" cy="373" r="2" fill="#333" /><circle cx="999" cy="373" r="2" fill="#333" />
        <text x="1007" y="379">SL: 465.8 (-2.47%)</text><text x="987" y="416">RR 1:4</text>
        <text x="1008" y="466">: 439.3 (+3.36%)</text><text x="1008" y="490">: 432.2 (+4.93%)</text><text x="1008" y="565">: 409.7 (+9.86%)</text>
      </g>
      <Target x={995} y={462} /><Target x={995} y={486} /><Target x={995} y={561} />
      <text x="879" y="529" fontSize="15" fill="#4a9a4e">peak profit: +3.34%</text>
      <g fill="#dcdcdc" stroke="#000" strokeWidth="5" paintOrder="stroke" strokeLinejoin="round">
        <path d="M85 901h16v18h-8v-11h-8zM112 901h10l-7 18h-9z" /><circle cx="106" cy="905" r="4" />
        <text x="131" y="919" fontFamily="Inter, sans-serif" fontWeight="600" fontSize="25">TradingView</text>
      </g>
    </g>
    {/* scales */}
    <g fill="#d6d6d6" fontSize="14">
      {[540, 0, 500, 480, 460, 0, 420, 400, 380, 360, 340, 320, 300].map((v, i) => v ? <text key={i} x="1787" y={Math.round(132 + i * 66.3)} fontWeight={v % 100 ? 500 : 700}>{v},0</text> : null)}
      {([['Авг', 318], ['Сен', 682], ['Окт', 1061], ['Ноя', 1450]] as [string, number][]).map(([t, x]) => <text key={t} x={x} y="960" textAnchor="middle" fontWeight="700">{t}</text>)}
    </g>
    <g fontSize="14" fill="#fff" fontWeight="600">
      <rect x="1777" y="434" width="75" height="38" rx="2" fill="#f23645" /><text x="1788" y="449">444,7</text><text x="1788" y="466" fill="#fbb5ba">01:56:20</text>
      <rect x="1777" y="473" width="54" height="21" rx="2" fill="#f23645" /><text x="1788" y="488">443,8</text>
      <rect x="1777" y="878" width="73" height="21" rx="2" fill="#ef5350" /><text x="1788" y="893">472,15 K</text>
      <rect x="1777" y="899" width="73" height="21" rx="2" fill="#2962ff" /><text x="1788" y="914">291,54 K</text>
    </g>
    <g fill="none" stroke="#d6d6d6" strokeWidth="1.500"><path d="M1814 948h9l5 7.500-5 7.500h-9l-5-7.500z" /><circle cx="1818.500" cy="955.500" r="2.500" /></g>
  </svg>
);

/* ---------- taskbar pictures ---------- */
const APP: Record<string, React.ReactNode> = {
  views: <><rect x="1" y="12" width="19" height="17" fill="#777" /><rect x="9" y="3" width="22" height="20" fill="#efefef" /><rect x="9" y="12" width="11" height="11" fill="#b9b9b9" /></>,
  folder: <><path d="M1 4h11l3 4H1z" fill="#d99b1c" /><rect x="1" y="7" width="30" height="22" rx="1" fill="#fbcf4c" /><path d="M6 30v-6q0-2 2-2h16q2 0 2 2v6z" fill="#1374c4" /><path d="M9 26h14" stroke="#0b4e8c" strokeWidth="2" /></>,
  edge: <><circle cx="16" cy="16" r="15" fill="#1271c4" /><path d="M2 12C6-2 30-2 31 14c0 7-11 8-12 4 3-8-11-12-17-6" fill="#3fd0a0" /><path d="M2 12c7-5 15-1 15 4-4 0-4 9 10 10C13 37-1 26 2 12" fill="#1a8fe0" /><path d="M17 15c-6 3-3 13 9 11-9 6-17-3-13-9q1-3 4-2" fill="#0b3f86" /></>,
  store: <><path d="M9 8V2h14v6" fill="none" stroke="#2fa9e0" strokeWidth="2.500" /><path d="M1 6h30v22q0 3-3 3H4q-3 0-3-3z" fill="#f3f3f3" /><path d="M10 12h5v5h-5z" fill="#e04f2c" /><path d="M17 12h5v5h-5z" fill="#7cb32f" /><path d="M10 19h5v5h-5z" fill="#2a9fd8" /><path d="M17 19h5v5h-5z" fill="#f4b62a" /></>,
  ya: <><circle cx="16" cy="16" r="15" fill="#fc3f1d" /><path d="M20.500 25V7h-3c-6 0-7 8-2 10l-5 8M20 17h-4" fill="none" stroke="#fff" strokeWidth="3" /></>,
  tg: <><circle cx="16" cy="16" r="13" fill="#2a9fd8" /><path d="M8 16 23 10l-2 13-5-3-2 3-1-5z" fill="#fff" /></>,
  yb: <><circle cx="16" cy="16" r="15" fill="#fff" /><path d="m9 8 7 9v9" fill="none" stroke="#f03a30" strokeWidth="5" /><path d="m23 8-7 9" stroke="#f07030" strokeWidth="5" /></>,
  pin: <><rect x="1" y="2" width="29" height="28" rx="7" fill="#5b4be8" /><path d="M1 20V9q0-7 7-7h8z" fill="#2f7cf5" /><path d="M10 22V16a6 6 0 1 1 6 6z" fill="none" stroke="#fff" strokeWidth="4" strokeLinejoin="round" /><circle cx="27" cy="1" r="10" fill="#57a8e0" /><text x="27" y="6" textAnchor="middle" fontSize="14" fill="#111">20</text></>,
  z: <><circle cx="16" cy="16" r="15" fill="#3a9ff0" /><path d="M9 8h14v4l-5 4 5 4v4H9v-4l5-4-5-4z" fill="#fff" /></>,
  tv: <><rect x="1" y="1" width="30" height="30" rx="5" fill="#0c0c0c" /><path d="M4 10h11v12h-6v-7H4zM20 10h8l-6 12h-6z" fill="#fff" /><circle cx="18" cy="12" r="2.500" fill="#fff" /></>,
  word: <><rect x="7" y="2" width="22" height="28" rx="2" fill="#1f5fd0" /><path d="M7 4q0-2 2-2h18q2 0 2 2v6H7z" fill="#7fc8f8" /><path d="M7 10h22v8H7z" fill="#3a8fe8" /><rect x="3" y="15" width="14" height="12" rx="2" fill="#174ea6" /><text x="10" y="25" textAnchor="middle" fontSize="10" fontWeight="700" fill="#fff">W</text></>,
  mpc: <><path d="m1 8 24-6 1 6-24 6z" fill="#f0f0f0" /><path d="m5 8 4 3M12 6l4 3M19 4l4 3" stroke="#222" strokeWidth="3" /><rect x="4" y="13" width="24" height="16" fill="#f5f5f5" /><g fontSize="14" fontWeight="700"><text x="4" y="26" fill="#d23a2a">3</text><text x="12" y="26" fill="#2a60c0">2</text><text x="20" y="26" fill="#2a9a40">1</text></g><path d="M20-7h5V9h-5zM28-7h5V9h-5z" fill="#c8d0ea" /><circle cx="3" cy="38" r="3" fill="#f5d020" /></>,
};
const AppIcon = ({ n }: { n: string }) => <svg width="32" height="32" viewBox="0 0 32 32" overflow="visible" aria-hidden="true">{APP[n]}</svg>;
const TASKS: [string, string, string?, number?, string?][] = [['views', 'Представление задач'], ['folder', 'Проводник', undefined, 8, '#9a9a9a'], ['edge', 'Edge'], ['store', 'Store'], ['ya', 'Яндекс'], ['tg', 'Telegram'], ['yb', 'Яндекс Браузер', '#7c3b48', 28, '#ff9aac'], ['pin', 'Сообщения', undefined, 8, '#9a9a9a'], ['z', 'Z', undefined, 8, '#9a9a9a'], ['tv', 'TradingView', '#343536', 20, '#62b4e8'], ['word', 'Word', undefined, 8, '#9a9a9a'], ['mpc', 'Плеер', undefined, 26, '#8c8c8c']];

const LEFT1 = ['cross', 'line', 'fib', 'pattern', 'projection', 'zigzag', 'text', 'smile'];
const FAVS = ['hray', 'line', 'marker', 'brush', 'text', 'vrange', 'hrange', 'ext', 'hline', 'eraser', 'flag', 'image', 'arrowLine', 'zigzag', 'cells', 'arrowOut'];

export default function App() {
  return (
    <Page>
      <Global />
      <TitleBar>
        <Tab><Cocoa s={23} /><TabSymbol>CC1!</TabSymbol><Triangle /><span>443,8</span><Change>−2.53%</Change><TabTail>/&nbsp; Unnamed</TabTail></Tab>
        <WinButton $w={44} $dim aria-label="Новая вкладка"><Icon n="plus" s={22} /></WinButton>
        <Grow />
        <WinButton $w={64} $dim aria-label="Мониторы"><Icon n="screen" /></WinButton><Sep />
        <WinButton $w={62} $dim aria-label="Меню"><Icon n="dots" s={24} /></WinButton>
        <WinButton $w={62} aria-label="Свернуть"><Icon n="minus" s={18} /></WinButton>
        <WinButton $w={62} aria-label="Развернуть"><Icon n="restore" s={20} /></WinButton>
        <WinButton $w={63} aria-label="Закрыть"><Icon n="close" s={19} /></WinButton>
      </TitleBar>

      <Toolbar>
        <Avatar aria-label="Профиль">
          <svg width="24" height="30" viewBox="0 0 24 30"><path d="M1 3q0-2 2-2h13l7 7v15q0 3-3 3H1z" fill="#dbe6f5" /><path d="M16 1v7h7" fill="#9db4d2" /><path d="M1 26q5-14 14-8l5 8z" fill="#68b04a" /><path d="m23 12-14 15h14z" fill="#0f0f0f" /></svg>
          <Count>11</Count>
        </Avatar>
        <SymbolPill>CC1!<PillBadge><Icon n="gem" s={24} /></PillBadge></SymbolPill>
        <Tool $w={57} aria-label="Сравнить"><Icon n="plusCircle" s={26} /></Tool><Sep />
        <Intervals>
          {['5м', '15м', '30м', '1ч', '2ч', '3ч', '4ч', 'Д', 'Н', 'М', '3М'].map(t => <Interval key={t} $on={t === '3ч'}>{t}</Interval>)}
        </Intervals>
        <Tool $w={36} aria-label="Интервалы"><Icon n="chevron" s={26} /></Tool><Sep $m="0 1px 0 3px" />
        <Tool $w={58} aria-label="Свечи"><Icon n="candles" s={26} /></Tool><Sep />
        <Tool $w={56} aria-label="Индикаторы"><Icon n="indicators" s={28} /></Tool>
        <Tool $w={20} aria-label="Избранное"><Icon n="chevron" s={26} /></Tool>
        <Tool $w={58} aria-label="Шаблоны"><Icon n="grid" s={26} /></Tool><Sep />
        <Tool $w={60} aria-label="Оповещение"><Icon n="alarmPlus" s={26} /></Tool>
        <Tool $w={36} aria-label="Повтор"><Icon n="rewind" s={28} /></Tool><Sep $m="0 0 0 7px" />
        <Tool $w={58} aria-label="Отменить"><Icon n="undo" s={26} /></Tool>
        <Tool $w={36} $dim aria-label="Вернуть"><Icon n="redo" s={26} /></Tool>
        <Grow />
        <Tool $w={32} aria-label="Раскладка"><Icon n="square" s={30} /></Tool>
        <LayoutName>Unnamed</LayoutName>
        <Tool $w={42} aria-label="Сохранить"><Icon n="chevron" s={26} /></Tool><Sep />
        <Tool $w={54} aria-label="Быстрый поиск"><Icon n="flash" s={26} /></Tool>
        <Tool $w={44} aria-label="Настройки"><Icon n="hex" s={29} /></Tool>
        <Tool $w={48} aria-label="Во весь экран"><Icon n="full" s={27} /></Tool>
        <Tool $w={46} aria-label="Снимок"><Icon n="camera" s={27} /></Tool>
        <RoundButton>Торговать</RoundButton>
        <RoundButton $solid>Опубликовать</RoundButton>
      </Toolbar>

      <Body>
        <LeftBar>
          <Group $h={375}>{LEFT1.map((n, i) => <SideTool key={n} $tone={i === 0 ? 'active' : undefined} aria-label={n}><Icon n={n} s={27} /></SideTool>)}</Group>
          <Rule />
          <Group $h={89}><SideTool aria-label="Линейка"><Icon n="ruler" /></SideTool><SideTool aria-label="Увеличить"><Icon n="zoom" s={24} /></SideTool></Group>
          <Rule />
          <Group $h={185}>
            <SideTool $tone="white" aria-label="Магнит"><Icon n="magnet" /></SideTool><SideTool $tone="white" aria-label="Рисование"><Icon n="pencilLock" s={27} /></SideTool>
            <SideTool aria-label="Закрепить"><Icon n="lock" s={26} /></SideTool><SideTool aria-label="Скрыть"><Icon n="eye" s={27} /></SideTool>
          </Group>
          <Rule />
          <SideTool aria-label="Удалить"><Icon n="trash" s={25} /></SideTool>
          <Grow />
          <SideTool $tone="white" aria-label="Избранное"><Icon n="star" s={26} w={1.8} /></SideTool>
        </LeftBar>

        <Center>
          <Chart>
            <ChartCanvas />
            <Legend>
              <LegendRow>
                <Cocoa s={22} /><LegendTitle>Фьючерсный контракт на какао · 3ч · RUS</LegendTitle><Approx>≈</Approx>
                <Ohlc><span>ОТКР<em>453,8</em></span><span>МАКС<em>453,8</em></span><span>МИН<em>439,4</em></span><span>ЗАКР<em>444,7</em></span><em>−6,7 (−1,48%)</em><span>Объём<em>472,15 K</em></span></Ohlc>
              </LegendRow>
              <TradeRow><TradeButton $c="#f23645" $w={91}><b>443,8</b>ПРОДАТЬ</TradeButton><Spread>0,0</Spread><TradeButton $c="#3761f0" $w={81}><b>443,8</b>КУПИТЬ</TradeButton></TradeRow>
              <Collapse><Icon n="chevron" s={24} />15</Collapse>
            </Legend>
          </Chart>
          <BottomBar>
            {['1Д', '5Д', '1М', '3М', '6М', 'YTD', '1Г'].map(t => <Range key={t}>{t}</Range>)}
            <Favorites>
              <Grip>{Array.from({ length: 6 }, (_, i) => <i key={i} />)}</Grip>
              {FAVS.map(n => <FavTool key={n} aria-label={n}><Icon n={n} s={26} w={1.5} /></FavTool>)}
            </Favorites>
            <Grow />
            <Clock>15:03:39 UTC+5</Clock><Sep $m="0 12px 0 13px" /><Clock>корр</Clock>
          </BottomBar>
        </Center>

        <RightBar>
          <RightTool aria-label="Список котировок"><Icon n="bookmark" s={25} /></RightTool>
          <RightTool $on aria-label="Оповещения"><Icon n="alarm" s={30} /><Tip>Оповещения</Tip></RightTool>
          <RightTool aria-label="Слои"><Icon n="layers" s={28} /></RightTool>
          <RightTool aria-label="Чаты"><Icon n="chat" s={28} /></RightTool>
          <Grow />
          <RightTool aria-label="Скринер"><Icon n="target" s={34} w={1.3} /></RightTool>
          <RightTool aria-label="Пайн"><Icon n="pyramid" s={31} w={1.4} /></RightTool>
          <RightTool aria-label="Календарь"><Icon n="calendar" s={31} w={1.4} /></RightTool>
          <RightTool aria-label="Лента"><Icon n="rss" s={30} w={1.4} /><RightCount>5</RightCount></RightTool>
          <RightTool aria-label="Уведомления"><Icon n="bell" s={32} w={1.4} /></RightTool>
          <RightTool aria-label="Продукты"><Apps>{Array.from({ length: 9 }, (_, i) => <i key={i} />)}</Apps></RightTool>
          <Rule $m={2} />
          <RightTool aria-label="Помощь"><Icon n="help" s={34} w={1.3} /></RightTool>
        </RightBar>
      </Body>

      <Taskbar>
        <Weather>
          <svg width="32" height="32" viewBox="0 0 32 32"><circle cx="22" cy="10" r="8" fill="#f5a02c" /><path d="M7 29a7 7 0 0 1-1-13q4-10 12-4 3 2 3 6 9-1 9 6 0 5-5 5z" fill="#b9cdf0" /></svg>
          <span>21°C<small>Mostly cloudy</small></span>
        </Weather>
        <Task $bg="#1f2b31" aria-label="Пуск"><svg width="24" height="24" viewBox="0 0 24 24" fill="#1ea0f5"><path d="M0 0h11v11H0zM12 0h12v11H12zM0 12h11v12H0zM12 12h12v12H12z" /></svg></Task>
        <SearchBox><Icon n="search" s={22} /><input placeholder="Поиск" aria-label="Поиск" /></SearchBox>
        {TASKS.map(([n, label, bg, w, c]) => <Task key={n} $bg={bg} aria-label={label}><AppIcon n={n} />{w && <Mark $w={w} $c={c!} />}</Task>)}
        <Tray>
          <TrayItem aria-label="Значки"><Icon n="up" s={26} /></TrayItem>
          <TrayItem aria-label="OneDrive"><svg width="24" height="24" viewBox="0 0 24 24"><path d="M5 18a5 5 0 0 1 0-9q4-7 9-3 4 1 4 4 5 1 3 8z" fill="#6b7075" /><path d="m3 3 18 19" stroke="#e6e6e6" strokeWidth="2" /></svg></TrayItem>
          <TrayItem $pad={10}>РУС</TrayItem>
          <TrayItem aria-label="Wi-Fi"><Icon n="wifi" s={22} /></TrayItem>
          <TrayItem aria-label="Звук"><Icon n="sound" s={20} /></TrayItem>
          <TrayItem aria-label="Батарея"><svg width="27" height="20" viewBox="0 0 27 20"><rect x="1" y="4" width="22" height="13" rx="4" fill="#a3d99b" stroke="#eee" strokeWidth="1.500" /><path d="M25 8v5" stroke="#eee" strokeWidth="2" /><path d="m13 0-5 8h4l-1 6 6-8h-4z" fill="#fff" stroke="#1b252e" /></svg></TrayItem>
          <DateTime>13:03<br />22.09.2026</DateTime>
        </Tray>
      </Taskbar>
    </Page>
  );
}
